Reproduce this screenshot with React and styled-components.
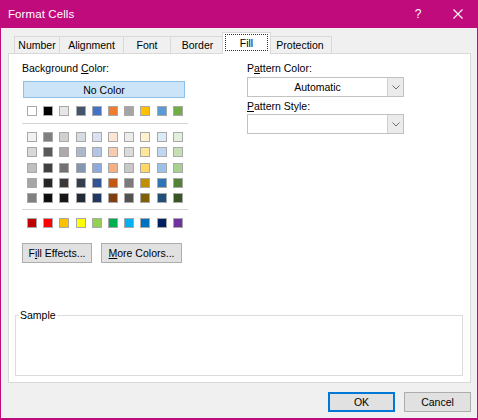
import React from "react";
import styled, { createGlobalStyle } from "styled-components";

const GlobalStyle = createGlobalStyle`
  html, body {
    margin: 0;
    padding: 0;
    background: #ffffff;
  }
  body {
    font-family: "Liberation Sans", Arial, sans-serif;
    font-size: 10.5px;
    color: #000;
  }
`;

const themeRow = ["#FFFFFF", "#000000", "#E7E6E6", "#44546A", "#4472C4", "#ED7D31", "#A5A5A5", "#FFC000", "#5B9BD5", "#70AD47"];

const tintRows = [
  ["#F2F2F2", "#7F7F7F", "#D0CECE", "#D6DCE4", "#D9E1F2", "#FCE4D6", "#EDEDED", "#FFF2CC", "#DDEBF7", "#E2EFDA"],
  ["#D9D9D9", "#595959", "#AEAAAA", "#ACB9CA", "#B4C6E7", "#F8CBAD", "#DBDBDB", "#FFE699", "#BDD7EE", "#C6E0B4"],
  ["#BFBFBF", "#404040", "#767171", "#8497B0", "#8EA9DB", "#F4B084", "#C9C9C9", "#FFD966", "#9BC2E6", "#A9D08E"],
  ["#A6A6A6", "#262626", "#3B3838", "#333F4F", "#305496", "#C65911", "#7B7B7B", "#BF8F00", "#2F75B5", "#548235"],
  ["#808080", "#0D0D0D", "#171616", "#222B35", "#203764", "#833C0C", "#525252", "#806000", "#1F4E78", "#375623"],
];

const standardRow = ["#C00000", "#FF0000", "#FFC000", "#FFFF00", "#92D050", "#00B050", "#00B0F0", "#0070C0", "#002060", "#7030A0"];

const tabs = [
  { label: "Number", w: 46 },
  { label: "Alignment", w: 65 },
  { label: "Font", w: 48 },
  { label: "Border", w: 55 },
  { label: "Fill", w: 49, active: true },
  { label: "Protection", w: 64 },
];

const Chevron = () => (
  <svg width="8" height="5" viewBox="0 0 8 5">
    <polyline points="0.5,0.5 4,4 7.5,0.5" fill="none" stroke="#6d6d6d" strokeWidth="1" />
  </svg>
);

const Combo = ({ value }) => (
  <ComboBox>
    <ComboText>{value}</ComboText>
    <ComboArrow>
      <Chevron />
    </ComboArrow>
  </ComboBox>
);

const SwatchRow = ({ colors }) => (
  <Swatches>
    {colors.map((c, i) => (
      <Swatch key={i} $color={c} />
    ))}
  </Swatches>
);

const App = () => {
  return (
    <>
      <GlobalStyle />
      <Window>
        <TitleBar>
          <Title>Format Cells</Title>
          <CaptionButtons>
            <CaptionButton>?</CaptionButton>
            <CaptionButton>
              <svg width="10" height="10" viewBox="0 0 10 10">
                <path d="M0.5 0.5 L9.5 9.5 M9.5 0.5 L0.5 9.5" stroke="#fff" strokeWidth="1.1" />
              </svg>
            </CaptionButton>
          </CaptionButtons>
        </TitleBar>

        <Body>
          <TabStrip>
            {tabs.map((t) => (
              <Tab key={t.label} $w={t.w} $active={t.active}>
                {t.active ? <Focus>{t.label}</Focus> : t.label}
              </Tab>
            ))}
          </TabStrip>

          <Panel>
            <TopRow>
              <LeftCol>
                <Label>
                  Background <u>C</u>olor:
                </Label>
                <NoColor>No Color</NoColor>
                <Block $top={8}>
                  <SwatchRow colors={themeRow} />
                </Block>
                <Separator $top={7} />
                <Grid>
                  {tintRows.map((row, i) => (
                    <SwatchRow key={i} colors={row} />
                  ))}
                </Grid>
                <Separator $top={6} />
                <Block $top={8}>
                  <SwatchRow colors={standardRow} />
                </Block>
                <ButtonRow>
                  <Button $w={70}>
                    F<u>i</u>ll Effects...
                  </Button>
                  <Button $w={81}>
                    <u>M</u>ore Colors...
                  </Button>
                </ButtonRow>
              </LeftCol>

              <RightCol>
                <Label>
                  P<u>a</u>ttern Color:
                </Label>
                <ComboWrap $top={2}>
                  <Combo value="Automatic" />
                </ComboWrap>
                <Label $top={3}>
                  <u>P</u>attern Style:
                </Label>
                <ComboWrap $top={1}>
                  <Combo value="" />
                </ComboWrap>
              </RightCol>
            </TopRow>

            <SampleGroup>
              <legend>Sample</legend>
            </SampleGroup>
          </Panel>

          <Footer>
            <DialogButton $default>OK</DialogButton>
            <DialogButton>Cancel</DialogButton>
          </Footer>
        </Body>
      </Window>
    </>
  );
};

export default App;

// Styled Components
const Window = styled.div`
  width: 478px;
  height: 420px;
  box-sizing: border-box;
  display: flex;
  flex-direction: column;
  background: #f0f0f0;
  border: 1px solid #c00b7c;
  border-top: none;
  border-bottom-width: 2px;
`;

const TitleBar = styled.div`
  height: 28px;
  flex-shrink: 0;
  display: flex;
  align-items: center;
  justify-content: space-between;
  background: #c00b7c;
  margin: 0 -1px;
  padding-left: 8px;
  color: #fff;
`;

const Title = styled.span`
  font-size: 11.5px;
  letter-spacing: 0.1px;
`;

const CaptionButtons = styled.div`
  display: flex;
  height: 100%;
`;

const CaptionButton = styled.div`
  width: 40px;
  height: 100%;
  display: flex;
  align-items: center;
  justify-content: center;
  font-size: 12px;
  color: #fff;
`;

const Body = styled.div`
  flex: 1;
  display: flex;
  flex-direction: column;
  padding: 4px 6px 0 7px;
`;

const TabStrip = styled.div`
  display: flex;
  align-items: flex-end;
  height: 21px;
  padding-left: 6px;
  position: relative;
  z-index: 1;
`;

const Tab = styled.div`
  box-sizing: border-box;
  width: ${(p) => p.$w}px;
  height: ${(p) => (p.$active ? 22 : 17)}px;
  margin-left: ${(p) => (p.$active ? -3 : -1)}px;
  margin-right: ${(p) => (p.$active ? -2 : 0)}px;
  margin-bottom: ${(p) => (p.$active ? -1 : 0)}px;
  border: 1px solid #d9d9d9;
  border-bottom: none;
  background: ${(p) => (p.$active ? "#ffffff" : "#f0f0f0")};
  position: relative;
  z-index: ${(p) => (p.$active ? 2 : 1)};
  display: flex;
  align-items: center;
  justify-content: center;
  padding-bottom: ${(p) => (p.$active ? 2 : 0)}px;

  &:first-child {
    margin-left: 0;
  }
`;

const Focus = styled.span`
  display: flex;
  align-items: center;
  justify-content: center;
  width: 41px;
  height: 15px;
  outline: 1px dotted #333;
`;

const Panel = styled.div`
  height: 330px;
  box-sizing: border-box;
  display: flex;
  flex-direction: column;
  background: #fff;
  border: 1px solid #d9d9d9;
  padding: 8px 7px 6px 6px;
`;

const TopRow = styled.div`
  display: grid;
  grid-template-columns: 225px 157px;
  padding-left: 7px;
`;

const LeftCol = styled.div`
  display: flex;
  flex-direction: column;
`;

const RightCol = styled.div`
  display: flex;
  flex-direction: column;
`;

const Label = styled.div`
  height: 13px;
  line-height: 13px;
  margin-top: ${(p) => p.$top || 0}px;
  white-space: nowrap;

  u {
    text-underline-offset: 1px;
  }
`;

const NoColor = styled.div`
  box-sizing: border-box;
  width: 162px;
  height: 17px;
  margin: 6px 0 0 1px;
  background: #cce4f7;
  border: 1px solid #8ec1ea;
  display: flex;
  align-items: center;
  justify-content: center;
`;

const Block = styled.div`
  margin-top: ${(p) => p.$top}px;
`;

const Swatches = styled.div`
  display: grid;
  grid-template-columns: repeat(10, 10px);
  column-gap: 6.2px;
  padding-left: 5px;
`;

const Swatch = styled.span`
  box-sizing: border-box;
  width: 10px;
  height: 10px;
  background: ${(p) => p.$color};
  border: 1px solid #a9a9a9;
`;

const Separator = styled.div`
  width: 166px;
  height: 1px;
  background: #d4d4d4;
  margin-top: ${(p) => p.$top}px;
`;

const Grid = styled.div`
  display: flex;
  flex-direction: column;
  gap: 5.25px;
  margin-top: 8px;
`;

const ButtonRow = styled.div`
  display: flex;
  gap: 9px;
  margin-top: 15px;
`;

const Button = styled.div`
  box-sizing: border-box;
  width: ${(p) => p.$w}px;
  height: 20px;
  background: #e1e1e1;
  border: 1px solid #adadad;
  display: flex;
  align-items: center;
  justify-content: center;
  white-space: nowrap;
`;

const ComboWrap = styled.div`
  margin-top: ${(p) => p.$top}px;
`;

const ComboBox = styled.div`
  box-sizing: border-box;
  width: 157px;
  height: 20px;
  display: flex;
  border: 1px solid #c2c2c2;
  background: #fff;
`;

const ComboText = styled.div`
  flex: 1;
  display: flex;
  align-items: center;
  justify-content: center;
`;

const ComboArrow = styled.div`
  box-sizing: border-box;
  width: 16px;
  display: flex;
  align-items: center;
  justify-content: center;
  background: #ebebeb;
  border-left: 1px solid #cfcfcf;
`;

const SampleGroup = styled.fieldset`
  margin: auto 0 0 0;
  box-sizing: border-box;
  height: 67px;
  padding: 0 0 0 3px;
  border: 1px solid #dcdcdc;

  legend {
    padding: 0 1px;
    line-height: 12px;
  }
`;

const Footer = styled.div`
  display: flex;
  justify-content: flex-end;
  gap: 9px;
  margin-top: 9px;
`;

const DialogButton = styled.div`
  box-sizing: border-box;
  width: 67px;
  height: 20px;
  background: #e1e1e1;
  border: ${(p) => (p.$default ? "2px solid #0078d7" : "1px solid #adadad")};
  display: flex;
  align-items: center;
  justify-content: center;
`;
